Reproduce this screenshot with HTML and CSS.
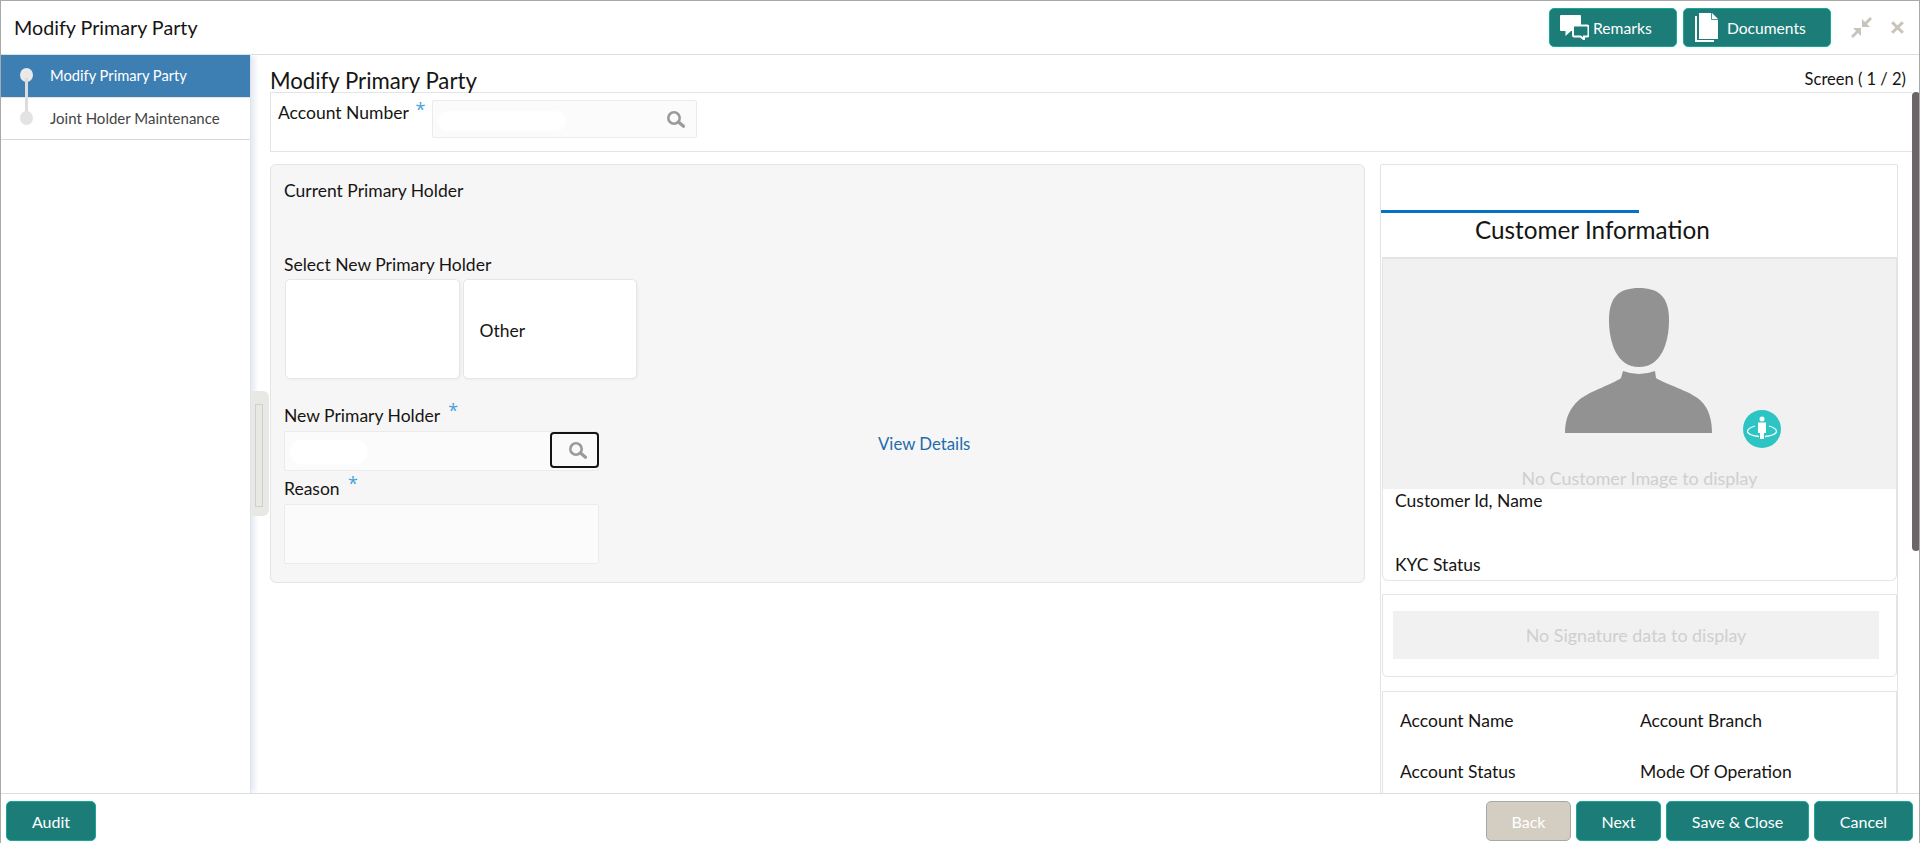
FILE: index.html
```html
<!DOCTYPE html>
<html lang="en">
<head>
<meta charset="utf-8">
<title>Modify Primary Party</title>
<link rel="stylesheet" href="styles.css">
</head>
<body>
<div class="app">
  <header class="top">
    <div class="top-title">Modify Primary Party</div>
    <div class="top-actions">
      <button class="btn btn-remarks" type="button">
        <svg class="ico-remarks" viewBox="0 0 29 25"><path d="M1 0H20a1 1 0 0 1 1 1V10H14a2 2 0 0 0-2 2V16H11L5.500 21V16H1a1 1 0 0 1-1-1V1a1 1 0 0 1 1-1Z" fill="#fff"/><path d="M14 10.500H27a1.500 1.500 0 0 1 1.500 1.500V20a1.500 1.500 0 0 1-1.500 1.500H24V24.500L20.500 21.500H14a1 1 0 0 1-1-1V11.500a1 1 0 0 1 1-1Z" fill="none" stroke="#fff" stroke-width="2"/></svg>
        <span>Remarks</span>
      </button>
      <button class="btn btn-docs" type="button">
        <svg class="ico-docs" viewBox="0 0 23 29"><path d="M4 0H17L23 6V26H4Z" fill="#fff"/><path d="M16.500 0V6.500H23" fill="none" stroke="#1c7d78" stroke-width=".8"/><path d="M1 3V28H19" fill="none" stroke="#fff" stroke-width="2"/></svg>
        <span>Documents</span>
      </button>
      <svg class="ico-min" viewBox="0 0 21 21"><path d="M19 0 21 2 16 7 19 10H11V2L14 5Z" fill="#c9c4b9"/><path d="M2 21 0 19 5 14 2 11H10V19L7 16Z" fill="#c9c4b9"/></svg>
      <svg class="ico-close" viewBox="0 0 13 13"><path d="M1.200 1.200 11.800 11.800M11.800 1.200 1.200 11.800" stroke="#c9c4b9" stroke-width="3"/></svg>
    </div>
  </header>

  <div class="middle">
    <nav class="side">
      <div class="step step-on"><span class="dot"></span><span class="step-a">Modify Primary Party</span></div>
      <div class="step"><span class="dot"></span><span>Joint Holder Maintenance</span></div>
    </nav>

    <main class="content">
      <div class="handle"><span class="handle-grip"></span></div>
      <div class="scroll-thumb"></div>

      <div class="title-row">
        <h1 class="page-title">Modify Primary Party</h1>
        <div class="screen-no">Screen ( 1 / 2)</div>
      </div>

      <div class="acct-bar">
        <label class="lbl lbl-acct">Account Number</label>
        <span class="req req-acct">*</span>
        <div class="input input-acct">
          <span class="smudge smudge-acct"></span>
          <svg class="ico-search" viewBox="0 0 18 17"><circle cx="7" cy="7" r="5.700" fill="none" stroke="#9b9b9b" stroke-width="2.600"/><path d="M11.500 11 16.500 15.300" stroke="#9b9b9b" stroke-width="3.200" stroke-linecap="round"/></svg>
        </div>
      </div>

      <div class="columns">
        <section class="holder">
          <div class="lbl">Current Primary Holder</div>
          <div class="lbl lbl-select">Select New Primary Holder</div>
          <div class="cards">
            <div class="pick"></div>
            <div class="pick"><span class="pick-text">Other</span></div>
          </div>
          <div class="holder-row">
            <div class="holder-form">
              <div class="lbl">New Primary Holder <span class="req req-np">*</span></div>
              <div class="input input-np">
                <span class="smudge smudge-np"></span>
                <span class="focus-btn">
                  <svg class="ico-search" viewBox="0 0 18 17"><circle cx="7" cy="7" r="5.700" fill="none" stroke="#9b9b9b" stroke-width="2.600"/><path d="M11.500 11 16.500 15.300" stroke="#9b9b9b" stroke-width="3.200" stroke-linecap="round"/></svg>
                </span>
              </div>
              <div class="lbl lbl-reason">Reason <span class="req req-re">*</span></div>
              <div class="input input-reason"></div>
            </div>
            <a class="view-link" href="#">View Details</a>
          </div>
        </section>

        <aside class="cust">
          <div class="tab-strip"><span class="tab-line"></span></div>
          <h2 class="cust-title">Customer Information</h2>
          <div class="cust-card">
            <div class="photo">
              <div class="person">
                <svg class="person-svg" viewBox="0 0 147 145"><path d="M74 0C55 0 44 8 44 32 44 55 52 79 74 79 96 79 104 55 104 32 104 8 93 0 74 0Z" fill="#929292"/><path d="M58 83Q74 89 90 83L91 90C100 96 125 103 135 112 144 120 147 132 147 145H0C0 130 5 120 14 112 25 103 48 96 56 90Z" fill="#929292"/></svg>
                <svg class="badge" viewBox="0 0 38 38"><circle cx="19" cy="19" r="19" fill="#2cc5c3"/><circle cx="19" cy="9" r="2.500" fill="#fff"/><path d="M15 12.500H23V23H21V29H17V23H15Z" fill="#fff"/><path d="M12 16C7 17.500 4.500 19.500 4.500 21.500 4.500 24 10 26 16 26.500M26 16C31 17.500 33.500 19.500 33.500 21.500 33.500 24 28 26 22 26.500" fill="none" stroke="#fff" stroke-width="1.300"/></svg>
              </div>
              <div class="photo-note">No Customer Image to display</div>
            </div>
            <div class="lbl cust-id">Customer Id, Name</div>
            <div class="lbl cust-kyc">KYC Status</div>
          </div>
          <div class="sign-card">
            <div class="sign-box">No Signature data to display</div>
          </div>
          <div class="acct-card">
            <div class="lbl">Account Name</div>
            <div class="lbl">Account Branch</div>
            <div class="lbl">Account Status</div>
            <div class="lbl">Mode Of Operation</div>
          </div>
        </aside>
      </div>
    </main>
  </div>

  <footer class="bottom">
    <button class="btn btn-audit" type="button">Audit</button>
    <div class="bottom-right">
      <button class="btn btn-back" type="button">Back</button>
      <button class="btn btn-next" type="button">Next</button>
      <button class="btn btn-save" type="button">Save &amp; Close</button>
      <button class="btn btn-cancel" type="button">Cancel</button>
    </div>
  </footer>
</div>
</body>
</html>
```

FILE: styles.css
```css
* { box-sizing: border-box; }
html, body { margin: 0; padding: 0; height: 843px; overflow: hidden; background: #fff; }
body { font-family: Lato, "Open Sans", "Liberation Sans", sans-serif; color: #161513; }

.app {
  height: 843px;
  display: flex;
  flex-direction: column;
  border: 1px solid #a9a9a9;
  border-bottom: 0;
}

.top {
  height: 54px;
  flex: none;
  display: flex;
  align-items: center;
  justify-content: space-between;
  border-bottom: 1px solid #dcdfe0;
  padding-left: 13px;
}
.top-title { font-size: 19.700px; line-height: 24px; margin-top: 1px; }
.top-actions { display: flex; align-items: center; }

.btn {
  font-family: inherit;
  font-size: 16px;
  height: 40px;
  padding: 0;
  color: #fff;
  background: #1c7d78;
  border: 1px solid #17a89a;
  border-radius: 5px;
  display: inline-flex;
  align-items: center;
  justify-content: center;
}
.btn-remarks { width: 128px; height: 39px; margin-top: -1px; justify-content: flex-start; padding: 2px 0 0 10px; gap: 4px; font-size: 15.700px; }
.btn-docs { width: 148px; height: 39px; margin-left: 6px; margin-top: -1px; justify-content: flex-start; padding: 2px 0 0 11px; gap: 9px; font-size: 15.600px; }
.ico-remarks { width: 29px; height: 25px; margin-top: -2px; }
.ico-docs { width: 23px; height: 29px; margin-top: -2px; }
.ico-min { width: 21px; height: 21px; margin-left: 20px; }
.ico-close { width: 13px; height: 13px; margin-left: 19px; margin-right: 15px; }

.middle { flex: 1; min-height: 0; display: flex; }

.side {
  width: 250px;
  flex: none;
  border-right: 1px solid #dde3ea;
  box-shadow: 5px 0 5px -1px #e6ebf2;
  position: relative;
  z-index: 1;
}
.step {
  height: 42px;
  display: flex;
  align-items: center;
  font-size: 15px;
  color: #444;
  position: relative;
  padding-bottom: 2px;
}
.step-a { font-size: 14.700px; }
.step-on { background: #3d7fb3; color: #fff; }
.step + .step { height: 43px; border-top: 1px solid #e4e4e4; border-bottom: 1px solid #d8d8d8; }
.dot {
  width: 13px;
  height: 14px;
  border-radius: 50%;
  background: #e3e3e3;
  margin: 0 17px 0 19px;
  flex: none;
  position: relative;
}
.step-on .dot { background: #e9e9e9; }
.step-on .dot::after {
  content: "";
  position: absolute;
  left: 5px;
  top: 10px;
  width: 3px;
  height: 36px;
  background: #dcdcdc;
}

.content {
  flex: 1;
  min-width: 0;
  position: relative;
  overflow: hidden;
  padding-left: 19px;
}
.handle {
  position: absolute;
  left: 0;
  top: 336px;
  width: 18px;
  height: 125px;
  background: #e8e8e5;
  border-radius: 0 6px 6px 0;
  z-index: 2;
  padding: 13px 6px 9px 4px;
}
.handle-grip { display: block; height: 100%; border: 1px solid #cfcfcc; }
.scroll-thumb {
  position: absolute;
  right: -1px;
  top: 37px;
  width: 8px;
  height: 459px;
  background: #6b6566;
  border-radius: 4px;
  z-index: 2;
}

.title-row {
  height: 37px;
  display: flex;
  align-items: flex-end;
  justify-content: space-between;
  padding-right: 13px;
}
.page-title { margin: 0; font-size: 22.200px; font-weight: 400; line-height: 26px; margin-bottom: -2px; }
.screen-no { font-size: 16.500px; line-height: 20px; margin-bottom: 3px; }

.lbl { font-size: 17.500px; line-height: 24px; }
.lbl-acct { width: 137px; flex: none; padding-top: 1px; }

.acct-bar {
  height: 60px;
  margin-right: 7px;
  border: 1px solid #e3e4e4;
  border-width: 1px 0 1px 1px;
  display: flex;
  align-items: flex-start;
  padding: 7px 0 0 7px;
}
.req { font-family: "Open Sans", sans-serif; color: #4a9fdc; font-size: 18px; line-height: 14px; vertical-align: 5px; }
.req-acct { width: 11px; flex: none; margin-top: 2px; text-align: center; }
.input {
  background: #fbfbfb;
  border: 1px solid #ebebeb;
  border-radius: 2px;
  position: relative;
  display: flex;
  align-items: center;
}
.input-acct { width: 265px; height: 38px; margin-left: 6px; justify-content: flex-end; padding-right: 11px; }
.smudge { position: absolute; background: #fff; border-radius: 10px; filter: blur(1px); }
.smudge-acct { left: 5px; top: 10px; width: 128px; height: 20px; }
.smudge-np { left: 5px; top: 8px; width: 77px; height: 24px; }
.ico-search { width: 18px; height: 17px; }

.columns { display: flex; align-items: flex-start; gap: 15px; margin-top: 12px; }

.holder {
  width: 1095px;
  flex: none;
  height: 419px;
  background: #f6f6f6;
  border: 1px solid #e3e4e4;
  border-radius: 6px;
  padding: 14px 0 0 13px;
}
.lbl-select { margin-top: 50px; }
.cards { display: flex; gap: 3px; margin: 2px 0 0 1px; }
.pick {
  width: 174.500px;
  height: 100px;
  background: #fff;
  border: 1px solid #e6e6e6;
  border-radius: 5px;
  box-shadow: 1px 1px 2px #ececec;
  font-size: 17.500px;
  display: flex;
  align-items: center;
  padding: 2px 0 0 16px;
}
.holder-row { display: flex; align-items: flex-start; margin-top: 24px; }
.holder-form { width: 315px; flex: none; }
.holder-form .req { margin-left: 4px; }
.input-np { height: 40px; margin-top: 3px; }
.focus-btn {
  position: absolute;
  right: -1px;
  top: 0;
  width: 49px;
  height: 36px;
  background: #fafafa;
  border: 2px solid #141414;
  border-radius: 4px;
  display: flex;
  align-items: center;
  justify-content: center;
  padding-left: 7px;
}
.lbl-reason { margin-top: 5px; }
.input-reason { height: 60px; margin-top: 3px; }
.view-link {
  font-size: 16.800px;
  line-height: 24px;
  color: #1f6cab;
  text-decoration: none;
  margin: 29px 0 0 279px;
}

.cust {
  width: 518px;
  flex: none;
  height: 640px;
  border: 1px solid #e3e4e4;
  border-radius: 2px;
  padding-top: 0;
}
.tab-strip { height: 48px; padding-top: 45px; }
.tab-line { display: block; width: 258px; height: 3px; background: #0572c6; }
.cust-title { margin: 0; height: 44px; font-size: 24.300px; font-weight: 400; line-height: 34px; padding-left: 94px; }
.cust-card {
  border: 1px solid #e3e4e4;
  border-top-width: 2px;
  border-radius: 0 0 6px 6px;
  height: 324px;
  margin: 0 0 0 1px;
}
.photo {
  height: 230px;
  background: #f1f1f1;
  display: flex;
  flex-direction: column;
  align-items: center;
  padding-top: 29px;
}
.person { position: relative; width: 147px; height: 145px; margin-right: 3px; flex: none; }
.person-svg { display: block; width: 147px; height: 145px; filter: blur(.7px); }
.badge { position: absolute; left: 178px; top: 122px; width: 38px; height: 38px; }
.photo-note { font-size: 17.900px; line-height: 22px; color: #cfcfcf; margin-top: 34px; }
.cust-id { padding-left: 12px; }
.cust-kyc { padding-left: 12px; margin-top: 40px; }
.sign-card {
  height: 83px;
  margin: 13px 0 0 1px;
  border: 1px solid #e3e4e4;
  border-radius: 0 0 5px 5px;
  padding: 16px 17px 0 10px;
}
.sign-box {
  height: 48px;
  background: #f1f1f1;
  color: #cfcfcf;
  font-size: 17.900px;
  display: flex;
  align-items: center;
  justify-content: center;
}
.acct-card {
  margin: 14px 0 0 1px;
  height: 120px;
  border: 1px solid #e3e4e4;
  padding: 17px 0 0 17px;
  display: grid;
  grid-template-columns: 240px 240px;
  grid-auto-rows: 51px;
  align-content: start;
}

.bottom {
  height: 50px;
  flex: none;
  border-top: 1px solid #dcdfe0;
  background: #fff;
  padding: 7px 6px 0 5px;
  display: flex;
  align-items: flex-start;
  justify-content: space-between;
  position: relative;
  z-index: 3;
}
.bottom-right { display: flex; gap: 5px; }
.btn-audit { width: 90px; }
.btn-back { width: 85px; background: #d4cdc2; border-color: #a8a8a8; }
.btn-next { width: 85px; }
.btn-save { width: 143px; }
.btn-cancel { width: 99px; }
```
